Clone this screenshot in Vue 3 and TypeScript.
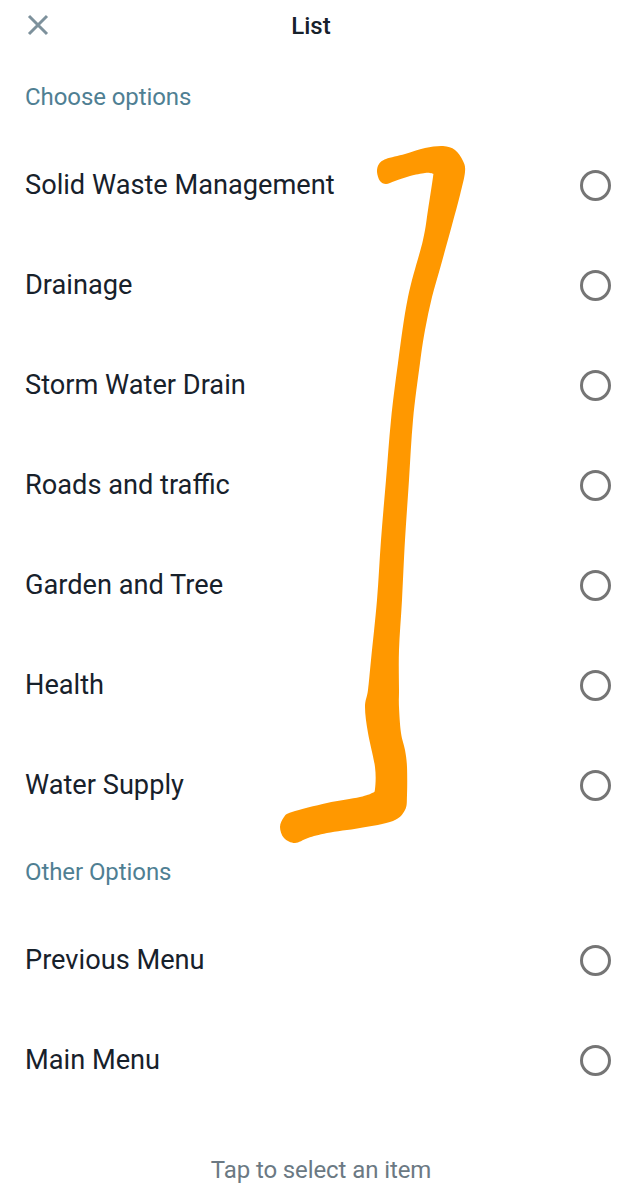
<script setup lang="ts">
const mainOptions: string[] = ['Solid Waste Management', 'Drainage', 'Storm Water Drain', 'Roads and traffic', 'Garden and Tree', 'Health', 'Water Supply']
const otherOptions: string[] = ['Previous Menu', 'Main Menu']

const outline: [number, number][] = [
  [377, 172], [379, 164], [386, 159], [405, 154], [425, 148], [443, 146], [455, 150], [463, 161], [465, 172], [460, 195], [452, 225], [441, 265], [432, 297], [425, 330], [420, 363], [413, 420], [409, 480], [405, 540], [402, 600], [399, 650], [399, 690], [399, 707], [401, 733], [405, 750], [407, 767], [407, 795], [405, 810], [393, 821], [360, 828], [327, 833], [308, 838], [295, 843], [284, 838], [280, 827], [284, 817], [292, 812], [327, 803], [360, 797], [372, 793], [375, 789], [375, 767], [368, 733], [365, 707], [368, 690], [371, 660], [377, 600], [381, 540], [386, 480], [391, 420], [398, 363], [408, 297], [423, 240], [428, 210], [433, 177], [433, 174], [430, 173], [425, 173], [410, 176], [395, 181], [386, 184], [380, 181]
]

function smoothClosed(p: [number, number][]): string {
  const n = p.length
  let d = `M${p[0][0]} ${p[0][1]}`
  for (let i = 0; i < n; i++) {
    const a = p[(i - 1 + n) % n], b = p[i], c = p[(i + 1) % n], e = p[(i + 2) % n]
    const c1x = b[0] + (c[0] - a[0]) / 6, c1y = b[1] + (c[1] - a[1]) / 6
    const c2x = c[0] - (e[0] - b[0]) / 6, c2y = c[1] - (e[1] - b[1]) / 6
    d += `C${c1x.toFixed(1)} ${c1y.toFixed(1)} ${c2x.toFixed(1)} ${c2y.toFixed(1)} ${c[0]} ${c[1]}`
  }
  return d + 'Z'
}
const scribble = smoothClosed(outline)
</script>

<template>
  <div class="screen">
    <header class="header">
      <svg class="close" width="26" height="26" viewBox="0 0 26 26" aria-label="Close">
        <path d="M4 4 L22 22 M22 4 L4 22" />
      </svg>
      <h1 class="title">List</h1>
    </header>

    <h2 class="section first">Choose options</h2>
    <ul class="list">
      <li v-for="item in mainOptions" :key="item" class="row">
        <span>{{ item }}</span>
        <span class="radio"></span>
      </li>
    </ul>

    <h2 class="section second">Other Options</h2>
    <ul class="list">
      <li v-for="item in otherOptions" :key="item" class="row">
        <span>{{ item }}</span>
        <span class="radio"></span>
      </li>
    </ul>

    <footer class="footer">Tap to select an item</footer>

    <svg class="scribble" width="622" height="1200" viewBox="0 0 622 1200" aria-hidden="true">
      <path :d="scribble" />
    </svg>
  </div>
</template>

<style scoped>
.screen {
  position: relative;
  width: 622px;
  height: 1200px;
  overflow: hidden;
  background: #ffffff;
  font-family: Roboto, "Liberation Sans", sans-serif;
  color: #17212b;
}
.header {
  position: relative;
  height: 52px;
  display: flex;
  align-items: center;
  justify-content: center;
}
.close {
  position: absolute;
  left: 25px;
  top: 12px;
}
.close path {
  fill: none;
  stroke: #7d919c;
  stroke-width: 3;
}
.title {
  margin: 0;
  font-size: 24px;
  font-weight: 500;
  line-height: 52px;
}
.section {
  margin: 0;
  padding: 0 25px;
  font-size: 24px;
  font-weight: 400;
  letter-spacing: -0.08px;
  line-height: 32px;
  color: #4f7f93;
}
.first {
  margin-top: 29px;
}
.second {
  margin-top: 21px;
}
.list {
  list-style: none;
  margin: 0;
  padding: 0;
}
.first + .list {
  margin-top: 22px;
}
.second + .list {
  margin-top: 22px;
}
.row {
  height: 100px;
  padding: 0 11px 0 25px;
  box-sizing: border-box;
  display: flex;
  align-items: center;
  justify-content: space-between;
  font-size: 27.2px;
  line-height: 32px;
}
.radio {
  width: 31px;
  height: 31px;
  margin-top: 1px;
  box-sizing: border-box;
  border: 3px solid #757575;
  border-radius: 50%;
}
.footer {
  margin-top: 44px;
  padding-left: 20px;
  text-align: center;
  font-size: 24px;
  letter-spacing: -0.1px;
  line-height: 32px;
  color: #6b7983;
}
.scribble {
  position: absolute;
  left: 0;
  top: 0;
  pointer-events: none;
}
.scribble path {
  fill: #ff9800;
}
</style>
